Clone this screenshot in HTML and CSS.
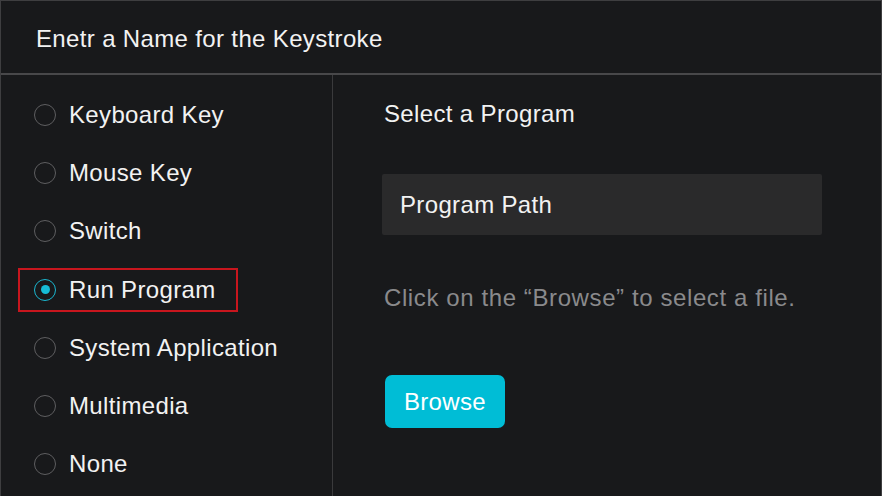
FILE: index.html
```html
<!DOCTYPE html>
<html>
<head>
<meta charset="utf-8">
<link rel="stylesheet" href="styles.css">
</head>
<body>
<div class="dialog">
  <header class="header">Enetr a Name for the Keystroke</header>
  <div class="body">
    <ul class="options">
      <li class="option"><span class="opt"><span class="radio"></span>Keyboard Key</span></li>
      <li class="option"><span class="opt"><span class="radio"></span>Mouse Key</span></li>
      <li class="option"><span class="opt"><span class="radio"></span>Switch</span></li>
      <li class="option"><span class="opt selected"><span class="radio checked"></span>Run Program</span></li>
      <li class="option"><span class="opt"><span class="radio"></span>System Application</span></li>
      <li class="option"><span class="opt"><span class="radio"></span>Multimedia</span></li>
      <li class="option"><span class="opt"><span class="radio"></span>None</span></li>
    </ul>
    <section class="panel">
      <div class="panel-title">Select a Program</div>
      <div class="path">Program Path</div>
      <div class="hint">Click on the “Browse” to select a file.</div>
      <button class="browse">Browse</button>
    </section>
  </div>
</div>
</body>
</html>
```

FILE: styles.css
```css
* { box-sizing: border-box; }
html, body { margin: 0; padding: 0; }
body {
  width: 882px;
  height: 496px;
  background: #18191b;
  font-family: "Liberation Sans", Arial, sans-serif;
  color: #f2f2f2;
  letter-spacing: 0.35px;
  overflow: hidden;
}
.dialog {
  width: 882px;
  height: 496px;
  border: 1px solid #3e3e40;
  border-bottom: none;
  display: flex;
  flex-direction: column;
}
.header {
  height: 74px;
  flex: none;
  padding: 3px 0 0 35px;
  display: flex;
  align-items: center;
  font-size: 24px;
  border-bottom: 2px solid #48484a;
}
.body {
  flex: 1;
  display: flex;
  min-height: 0;
}
.options {
  list-style: none;
  margin: 0;
  padding: 11px 0 0 17px;
  width: 332px;
  flex: none;
  border-right: 1px solid #3a3a3c;
}
.option {
  height: 58.2px;
  display: flex;
  align-items: center;
}
.opt {
  display: inline-flex;
  align-items: center;
  height: 44px;
  padding: 0 20px 0 14px;
  border: 2px solid transparent;
  font-size: 24px;
}
.opt.selected { border-color: #c8161e; }
.radio {
  width: 22px;
  height: 22px;
  border-radius: 50%;
  border: 1.5px solid #5e5e60;
  margin-right: 13px;
  flex: none;
  display: flex;
  align-items: center;
  justify-content: center;
}
.radio.checked { border-color: #1ab6cf; }
.radio.checked::after {
  content: "";
  width: 9px;
  height: 9px;
  border-radius: 50%;
  background: #16bcd6;
}
.panel {
  flex: 1;
  padding: 25px 0 0 49px;
  display: flex;
  flex-direction: column;
  align-items: flex-start;
}
.panel-title {
  font-size: 24px;
  line-height: 28px;
  margin-left: 2px;
}
.path {
  margin-top: 46px;
  width: 440px;
  height: 61px;
  background: #2a2a2b;
  padding-left: 18px;
  display: flex;
  align-items: center;
  font-size: 24px;
  border-radius: 2px;
}
.hint {
  margin-top: 49px;
  margin-left: 2px;
  font-size: 24px;
  line-height: 28px;
  letter-spacing: 0.6px;
  color: #8a8a8c;
}
.browse {
  margin-top: 63px;
  margin-left: 3px;
  width: 120px;
  height: 53px;
  border: none;
  border-radius: 7px;
  background: #00bdd6;
  color: #ffffff;
  font-family: "Liberation Sans", Arial, sans-serif;
  font-size: 24px;
  letter-spacing: 0.35px;
  padding: 0;
}
```
